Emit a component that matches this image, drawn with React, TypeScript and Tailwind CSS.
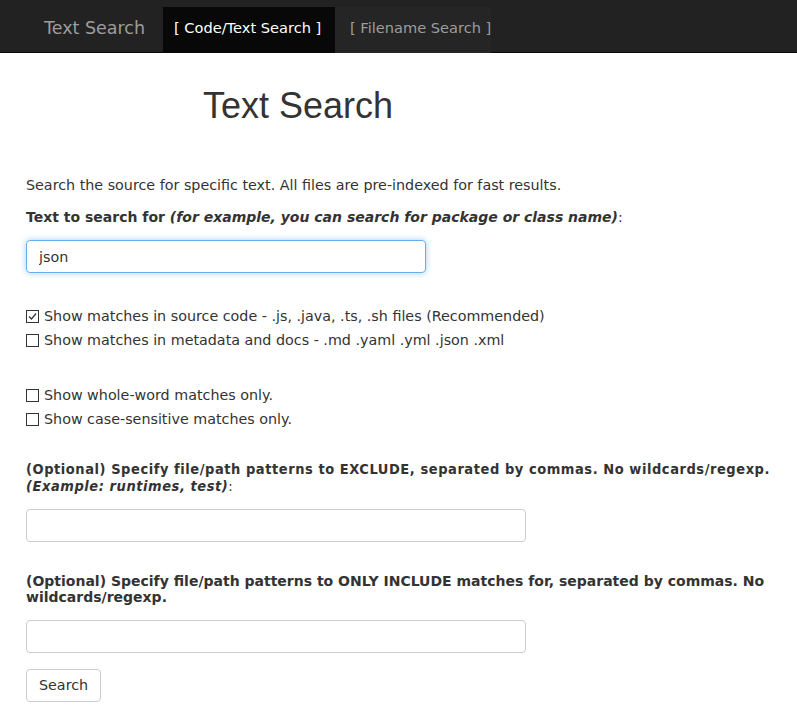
export default function App() {
  const sans = { fontFamily: '"DejaVu Sans", Verdana, sans-serif' };
  return (
    <div className="min-h-screen bg-white text-[#333]" style={sans}>
      <div className="h-[53px] bg-[#222] border-b border-[#080808] pt-[7px] flex">
        <div className="w-[163px] shrink-0 pl-[44px] pb-[4px] h-[46px] flex items-center text-[17.5px] text-[#9d9d9d] whitespace-nowrap">
          Text Search
        </div>
        <div className="w-[172px] shrink-0 h-[46px] pb-[4px] bg-[#080808] flex items-center pl-[11px] text-[14.6px] text-white whitespace-nowrap">
          [ Code/Text Search ]
        </div>
        <div className="w-[156px] shrink-0 h-[46px] pb-[4px] bg-[#252525] flex items-center pl-[15px] text-[14.6px] text-[#9d9d9d] whitespace-nowrap">
          [ Filename Search ]
        </div>
      </div>

      <div className="px-[26px]">
        <h1 className="pl-[177px] mt-[33px] text-[36px] leading-[40px] text-[#333]" style={{ fontFamily: '"Liberation Sans", Arial, sans-serif' }}>
          Text Search
        </h1>

        <p className="mt-[49px] text-[14.3px] leading-[20px]">
          Search the source for specific text. All files are pre-indexed for fast results.
        </p>
        <p className="mt-[12px] text-[14px] leading-[20px] font-bold">
          Text to search for <i>(for example, you can search for package or class name)</i>
          <span className="font-normal">:</span>
        </p>
        <input
          defaultValue="json"
          className="mt-[13px] w-[400px] h-[33px] px-[12px] text-[14.3px] rounded border border-[#66afe9] outline-none shadow-[0_0_6px_rgba(102,175,233,0.6)]"
        />

        <div className="mt-[33px] flex flex-col gap-[4px] text-[14.3px] leading-[20px]">
          <Check checked label="Show matches in source code - .js, .java, .ts, .sh files (Recommended)" />
          <Check label="Show matches in metadata and docs - .md .yaml .yml .json .xml" />
        </div>
        <div className="mt-[35px] flex flex-col gap-[4px] text-[14.3px] leading-[20px]">
          <Check label="Show whole-word matches only." />
          <Check label="Show case-sensitive matches only." />
        </div>

        <p
          className="mt-[32px] text-[14.5px] leading-[17px] tracking-[0.55px] font-bold"
          style={{ fontFamily: '"DejaVu Sans Condensed", "DejaVu Sans", sans-serif' }}
        >
          (Optional) Specify file/path patterns to EXCLUDE, separated by commas. No wildcards/regexp.
          <br />
          <i>(Example: runtimes, test)</i>
          <span className="font-normal">:</span>
        </p>
        <input className="mt-[14px] block w-[500px] h-[33px] rounded border border-[#ccc] outline-none" />

        <p className="mt-[31px] text-[14px] leading-[16px] font-bold">
          (Optional) Specify file/path patterns to ONLY INCLUDE matches for, separated by commas. No wildcards/regexp.
        </p>
        <input className="mt-[15px] block w-[500px] h-[33px] rounded border border-[#ccc] outline-none" />

        <button className="mt-[16px] h-[33px] px-[12px] text-[14.3px] rounded border border-[#ccc] bg-white text-[#333]">
          Search
        </button>
      </div>
    </div>
  );
}

function Check({ label, checked }: { label: string; checked?: boolean }) {
  return (
    <label className="flex items-center gap-[5px]">
      <span className="w-[13px] h-[13px] border border-[#333] flex items-center justify-center bg-white">
        {checked && (
          <svg width="11" height="11" viewBox="0 0 11 11">
            <path d="M2 5.5 L4.5 8 L9 2.5" fill="none" stroke="#333" strokeWidth="1.2" />
          </svg>
        )}
      </span>
      <span>{label}</span>
    </label>
  );
}
